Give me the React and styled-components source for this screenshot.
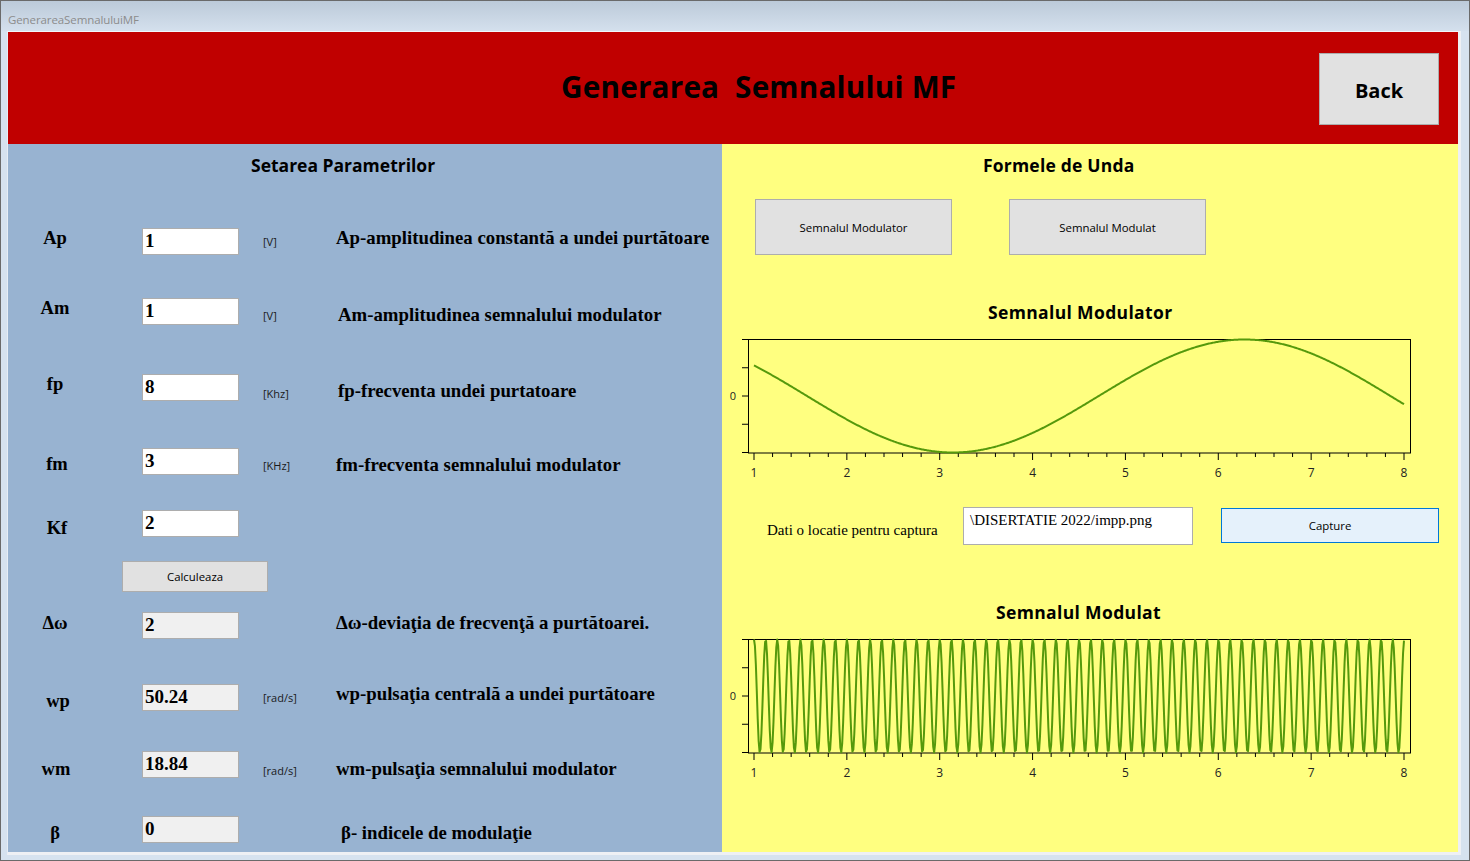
import React from "react";
import styled, { createGlobalStyle } from "styled-components";

const Global = createGlobalStyle`
  html, body { margin: 0; padding: 0; background: #d6e2ef; overflow: hidden; }
  * { box-sizing: border-box; }
`;

const UI = `"Open Sans", "Noto Sans", "DejaVu Sans", sans-serif`;
const SERIF = `"Liberation Serif", "Times New Roman", serif`;

const Window = styled.div`
  width: 1470px;
  height: 861px;
  border: 1px solid #6a6a6a;
  background: #d6e2ef;
  display: flex;
  flex-direction: column;
`;

const TitleBar = styled.div`
  height: 30px;
  flex: none;
  background: linear-gradient(#bccad9, #d4e0ed);
  display: flex;
  align-items: center;
  padding: 6px 0 0 7px;
  font-family: ${UI};
  font-size: 11.5px;
  color: #8c8c8c;
  letter-spacing: -0.1px;
`;

const Client = styled.div`
  flex: none;
  margin: 0 8px 5px 6px;
  width: 1454px;
  height: 824px;
  border-top: 1px solid #f2f6fa;
  border-left: 1px solid #e6edf5;
  border-right: 3px solid #eef0f4;
  border-bottom: 3px solid #eef0f4;
  display: flex;
  flex-direction: column;
`;

const Header = styled.header`
  height: 112px;
  flex: none;
  background: #c00000;
  display: flex;
  align-items: center;
`;

const Title = styled.h1`
  margin: 0 0 3px 553px;
  font-family: ${UI};
  font-weight: 700;
  font-size: 29.7px;
  color: #000;
  white-space: pre;
  letter-spacing: 0.2px;
`;

const BackButton = styled.button`
  margin-left: auto;
  margin-right: 19px;
  margin-top: 2px;
  width: 120px;
  height: 72px;
  background: #e1e1e1;
  border: 1px solid #adadad;
  font-family: ${UI};
  font-weight: 700;
  font-size: 20px;
  color: #000;
  padding: 2px 0 0;
`;

const Body = styled.div`
  flex: 1;
  display: grid;
  grid-template-columns: 714px 1fr;
`;

const LeftPanel = styled.section`
  background: #98b3d1;
  padding-top: 10px;
  display: flex;
  flex-direction: column;
`;

const RightPanel = styled.section`
  background: #ffff80;
  padding-top: 10px;
  display: flex;
  flex-direction: column;
`;

const PanelHeading = styled.h2`
  margin: 0 0 0 ${(p) => p.$left}px;
  height: 22px;
  line-height: 22px;
  font-family: ${UI};
  font-weight: 700;
  font-size: 17.5px;
  letter-spacing: ${(p) => p.$ls || 0}px;
  color: #000;
`;

const ParamRow = styled.div`
  display: grid;
  grid-template-columns: 134px 121px 73px 1fr;
  height: 27px;
  margin-top: ${(p) => p.$mt}px;
  align-items: start;
`;

const ParamLabel = styled.div`
  padding-right: 40px;
  text-align: center;
  font-family: ${SERIF};
  font-weight: 700;
  font-size: 18.5px;
  line-height: 20px;
  margin-top: ${(p) => 3.5 + p.$dy}px;
  padding-left: ${(p) => p.$dx || 0}px;
  white-space: nowrap;
`;

const ValueInput = styled.input`
  width: 97px;
  height: 27px;
  border: 1px solid #adadad;
  background: ${(p) => (p.readOnly ? "#f0f0f0" : "#ffffff")};
  font-family: ${SERIF};
  font-weight: 700;
  font-size: 19px;
  color: #000;
  padding: 0 0 2px 2px;
  outline: none;
`;

const Unit = styled.div`
  font-family: ${UI};
  font-size: 11px;
  line-height: 14px;
  color: #1a1a1a;
  margin-top: ${(p) => 6.5 + p.$dy}px;
`;

const Desc = styled.div`
  font-family: ${SERIF};
  font-weight: 700;
  font-size: 18.8px;
  line-height: 20px;
  white-space: nowrap;
  margin-top: ${(p) => 3.5 + p.$dy}px;
  padding-left: ${(p) => p.$dx || 0}px;
`;

const CalcButton = styled.button`
  margin: ${(p) => p.$mt}px 0 0 114px;
  width: 146px;
  height: 31px;
  background: #e1e1e1;
  border: 1px solid #adadad;
  font-family: ${UI};
  font-size: 11.4px;
  color: #000;
  padding: 0;
`;

const ButtonRow = styled.div`
  display: flex;
  gap: 57px;
  margin: 23px 0 0 33px;
`;

const GrayButton = styled.button`
  width: 197px;
  height: 56px;
  background: #e1e1e1;
  border: 1px solid #adadad;
  font-family: ${UI};
  font-size: 11.4px;
  color: #000;
  padding: 0;
`;

const ChartTitle = styled.h3`
  margin: ${(p) => p.$mt}px 0 0 ${(p) => p.$left}px;
  height: 22px;
  line-height: 22px;
  font-family: ${UI};
  font-weight: 700;
  font-size: 17.5px;
  letter-spacing: 0.35px;
  color: #000;
`;

const ChartSvg = styled.svg`
  display: block;
  margin-top: 7px;
  width: 736px;
  height: 155px;
`;

const CaptureRow = styled.div`
  display: flex;
  align-items: flex-start;
  margin: 22px 0 0 45px;
  height: 38px;
`;

const CaptureLabel = styled.div`
  font-family: ${SERIF};
  font-size: 15px;
  line-height: 18px;
  margin-top: 14px;
  width: 196px;
  white-space: nowrap;
`;

const PathBox = styled.div`
  width: 230px;
  height: 38px;
  background: #fff;
  border: 1px solid #adadad;
  font-family: ${SERIF};
  font-size: 15px;
  line-height: 18px;
  padding: 3px 0 0 6px;
  white-space: nowrap;
  overflow: hidden;
`;

const CaptureButton = styled.button`
  margin-left: 28px;
  margin-top: 1px;
  width: 218px;
  height: 35px;
  background: #e5f1fb;
  border: 1px solid #0078d7;
  font-family: ${UI};
  font-size: 11.4px;
  color: #000;
  padding: 0;
`;

const GREEN = "#55990c";

function Chart({ f, step }) {
  const X0 = 32;
  const SX = 650 / 7;
  const Y0 = 66;
  const SY = 56.5;
  const px = (t) => X0 + (t - 1) * SX;
  const py = (v) => Y0 - v * SY;
  const pts = [];
  for (let i = 0; ; i++) {
    const t = 1 + i * step;
    if (t > 8 + 1e-9) break;
    pts.push(`${px(t).toFixed(2)},${py(f(t)).toFixed(2)}`);
  }
  const xt = [];
  for (let k = 0; k <= 35; k++) {
    const t = 1 + k * 0.2;
    const major = k % 5 === 0;
    xt.push(
      <line key={k} x1={px(t)} x2={px(t)} y1={123} y2={major ? 130 : 127} stroke="#000" strokeWidth="1" />
    );
  }
  const yt = [-1, -0.5, 0, 0.5, 1].map((v) => (
    <line key={v} x1={20} x2={26.5} y1={py(v)} y2={py(v)} stroke="#000" strokeWidth="1" />
  ));
  return (
    <ChartSvg viewBox="0 0 736 155">
      <rect x="26.5" y="9.5" width="662" height="113.5" fill="none" stroke="#000" strokeWidth="1" />
      {yt}
      {xt}
      <polyline points={pts.join(" ")} fill="none" stroke={GREEN} strokeWidth="2" strokeLinejoin="round" />
      <text x="11" y="70" fontFamily={UI} fontSize="11" fill="#222" textAnchor="middle">0</text>
      {[1, 2, 3, 4, 5, 6, 7, 8].map((n) => (
        <text key={n} x={px(n)} y="147" fontFamily={UI} fontSize="12" fill="#222" textAnchor="middle">
          {n}
        </text>
      ))}
    </ChartSvg>
  );
}

const rows = [
  { label: "Ap", val: "1", unit: "[V]", desc: "Ap-amplitudinea constantă a undei purtătoare", mt: 52, ly: -3.5, uy: 0, dy: -3.5 },
  { label: "Am", val: "1", unit: "[V]", desc: "Am-amplitudinea semnalului modulator", mt: 43, ly: -3.5, uy: 4.5, dy: 3.5, ddx: 2 },
  { label: "fp", val: "8", unit: "[Khz]", desc: "fp-frecventa undei purtatoare", mt: 49, ly: -3.5, uy: 6.5, dy: 3.5, ddx: 2, ldx: -8 },
  { label: "fm", val: "3", unit: "[KHz]", desc: "fm-frecventa semnalului modulator", mt: 47, ly: 2.5, uy: 4.5, dy: 3.5, ldx: 4 },
  { label: "Kf", val: "2", mt: 35, ly: 4, uy: 0, dy: 0, ldx: 4 },
];
const rows2 = [
  { label: "Δω", val: "2", desc: "Δω-deviaţia de frecvenţă a purtătoarei.", mt: 20, ly: -3, dy: -3, ro: true },
  { label: "wp", val: "50.24", unit: "[rad/s]", desc: "wp-pulsaţia centrală a undei purtătoare", mt: 45, ly: 3.5, uy: 0, dy: -3.5, ro: true, ldx: 6 },
  { label: "wm", val: "18.84", unit: "[rad/s]", desc: "wm-pulsaţia semnalului modulator", mt: 40, ly: 4, uy: 6, dy: 4, ro: true, ldx: 2 },
  { label: "β", val: "0", desc: "β- indicele de modulaţie", mt: 38, ly: 3.5, dy: 3.5, ro: true, ldx: -4, ddx: 5 },
];

function Row({ r }) {
  return (
    <ParamRow $mt={r.mt}>
      <ParamLabel $dy={r.ly} $dx={r.ldx}>{r.label}</ParamLabel>
      <ValueInput readOnly={!!r.ro} defaultValue={r.val} />
      <Unit $dy={r.uy || 0}>{r.unit || ""}</Unit>
      <Desc $dy={r.dy} $dx={r.ddx}>{r.desc || ""}</Desc>
    </ParamRow>
  );
}

export default function App() {
  return (
    <>
      <Global />
      <Window>
        <TitleBar>GenerareaSemnaluluiMF</TitleBar>
        <Client>
          <Header>
            <Title>{"Generarea  Semnalului MF"}</Title>
            <BackButton>Back</BackButton>
          </Header>
          <Body>
            <LeftPanel>
              <PanelHeading $left={243}>Setarea Parametrilor</PanelHeading>
              {rows.map((r) => (
                <Row key={r.label} r={r} />
              ))}
              <div>
                <CalcButton $mt={24}>Calculeaza</CalcButton>
              </div>
              {rows2.map((r) => (
                <Row key={r.label} r={r} />
              ))}
            </LeftPanel>
            <RightPanel>
              <PanelHeading $left={261} $ls={0.2}>Formele de Unda</PanelHeading>
              <ButtonRow>
                <GrayButton>Semnalul Modulator</GrayButton>
                <GrayButton>Semnalul Modulat</GrayButton>
              </ButtonRow>
              <ChartTitle $mt={46} $left={266}>Semnalul Modulator</ChartTitle>
              <Chart f={(t) => Math.cos(t)} step={0.01} />
              <CaptureRow>
                <CaptureLabel>Dati o locatie pentru captura</CaptureLabel>
                <PathBox>\DISERTATIE 2022/impp.png</PathBox>
                <CaptureButton>Capture</CaptureButton>
              </CaptureRow>
              <ChartTitle $mt={56} $left={274}>Semnalul Modulat</ChartTitle>
              <Chart f={(t) => Math.cos(50.24 * t)} step={0.01} />
            </RightPanel>
          </Body>
        </Client>
      </Window>
    </>
  );
}
